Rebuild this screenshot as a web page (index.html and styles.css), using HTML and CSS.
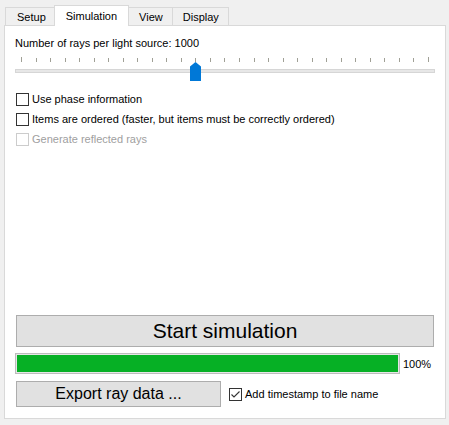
FILE: index.html
```html
<!DOCTYPE html>
<html>
<head>
<meta charset="utf-8">
<link rel="stylesheet" href="styles.css">
</head>
<body>
<div class="window">
  <div class="tabs">
    <div class="tab first">Setup</div>
    <div class="tab active">Simulation</div>
    <div class="tab">View</div>
    <div class="tab">Display</div>
  </div>
  <div class="panel">
    <div class="label">Number of rays per light source: 1000</div>
    <div class="slider">
      <div class="ticks">
        <i class="tall"></i><i></i><i></i><i></i><i></i><i></i><i></i><i></i><i></i><i></i><i></i><i></i><i></i><i></i><i></i><i></i><i></i><i></i><i></i><i></i><i></i><i></i><i></i><i></i><i></i><i></i><i></i><i></i><i class="tall"></i>
      </div>
      <div class="track"></div>
      <svg class="thumb" width="11" height="19" viewBox="0 0 11 19"><polygon points="5.5,0 11,4.5 11,19 0,19 0,4.5" fill="#0078d7"/></svg>
    </div>
    <div class="checks">
      <div class="check"><span class="box"></span><span>Use phase information</span></div>
      <div class="check"><span class="box"></span><span>Items are ordered (faster, but items must be correctly ordered)</span></div>
      <div class="check disabled"><span class="box"></span><span>Generate reflected rays</span></div>
    </div>
    <div class="spacer"></div>
    <div class="start">Start simulation</div>
    <div class="progress-row">
      <div class="progress"><div class="fill" style="width:100%"></div></div>
      <span class="pct">100%</span>
    </div>
    <div class="export-row">
      <div class="export">Export ray data ...</div>
      <div class="check checked">
        <span class="box"><svg width="11" height="11" viewBox="0 0 11 11"><polyline points="1.5,5.5 4,8 9.5,2.5" fill="none" stroke="#333" stroke-width="1.1"/></svg></span>
        <span>Add timestamp to file name</span>
      </div>
    </div>
  </div>
</div>
</body>
</html>
```

FILE: styles.css
```css
html, body {
  margin: 0;
  padding: 0;
  background: #f0f0f0;
  font-family: "Liberation Sans", Arial, sans-serif;
  font-size: 11px;
  color: #000;
}

.window {
  width: 449px;
  height: 425px;
  padding-top: 7px;
  box-sizing: border-box;
}

.tabs {
  display: flex;
  margin-left: 5px;
  height: 18px;
  align-items: flex-start;
}

.tab {
  height: 18px;
  box-sizing: border-box;
  border: 1px solid #d9d9d9;
  border-bottom: none;
  margin-right: -1px;
  padding: 0 9px 0 10px;
  line-height: 18px;
  background: #f0f0f0;
}

.tab.first {
  padding: 0 10px 0 11px;
}

.tab.active {
  position: relative;
  z-index: 1;
  background: #fff;
  height: 21px;
  margin: -2px -1px 0 -2px;
  padding: 2px 11px 0 11px;
  line-height: 17px;
}

.panel {
  margin-left: 4px;
  width: 442px;
  height: 394px;
  box-sizing: border-box;
  border: 1px solid #d9d9d9;
  background: #fff;
  display: flex;
  flex-direction: column;
  padding: 10px 0 11px 0;
}

.label {
  margin-left: 10px;
  line-height: 15px;
}

.slider {
  position: relative;
  margin-top: 6px;
  height: 24px;
}

.ticks {
  display: flex;
  justify-content: space-between;
  align-items: flex-end;
  margin-left: 16px;
  width: 408px;
  height: 5px;
}

.ticks i {
  display: block;
  width: 1px;
  height: 4px;
  background: #a0a096;
}

.ticks i.tall {
  height: 5px;
}

.track {
  margin-top: 7px;
  margin-left: 10px;
  width: 420px;
  height: 4px;
  box-sizing: border-box;
  background: #e7e7e7;
  border: 1px solid #d6d6d6;
}

.thumb {
  position: absolute;
  left: 185px;
  top: 5px;
  display: block;
}

.checks {
  margin-top: 8px;
  margin-left: 11px;
  display: flex;
  flex-direction: column;
}

.check {
  display: flex;
  align-items: center;
  height: 20px;
  gap: 3px;
}

.box {
  width: 13px;
  height: 13px;
  box-sizing: border-box;
  border: 1px solid #333;
  background: #fff;
  display: flex;
  align-items: center;
  justify-content: center;
}

.check.disabled {
  color: #a0a0a0;
}

.check.disabled .box {
  border-color: #cccccc;
}

.spacer {
  flex: 1;
}

.start {
  margin-left: 11px;
  width: 418px;
  height: 32px;
  box-sizing: border-box;
  background: #e1e1e1;
  border: 1px solid #adadad;
  font-size: 21px;
  display: flex;
  align-items: center;
  justify-content: center;
}

.progress-row {
  display: flex;
  align-items: center;
  margin-top: 6px;
  margin-left: 10px;
  height: 21px;
}

.progress {
  width: 385px;
  height: 21px;
  box-sizing: border-box;
  border: 1px solid #bcbcbc;
  background: #e6e6e6;
  padding: 1px;
}

.fill {
  height: 100%;
  background: #06b025;
}

.pct {
  margin-left: 3px;
  font-size: 11px;
}

.export-row {
  display: flex;
  align-items: center;
  margin-top: 7px;
  margin-left: 11px;
}

.export {
  width: 205px;
  height: 26px;
  box-sizing: border-box;
  background: #e1e1e1;
  border: 1px solid #adadad;
  font-size: 16px;
  display: flex;
  align-items: center;
  justify-content: center;
}

.export-row .check {
  margin-left: 8px;
}
```
